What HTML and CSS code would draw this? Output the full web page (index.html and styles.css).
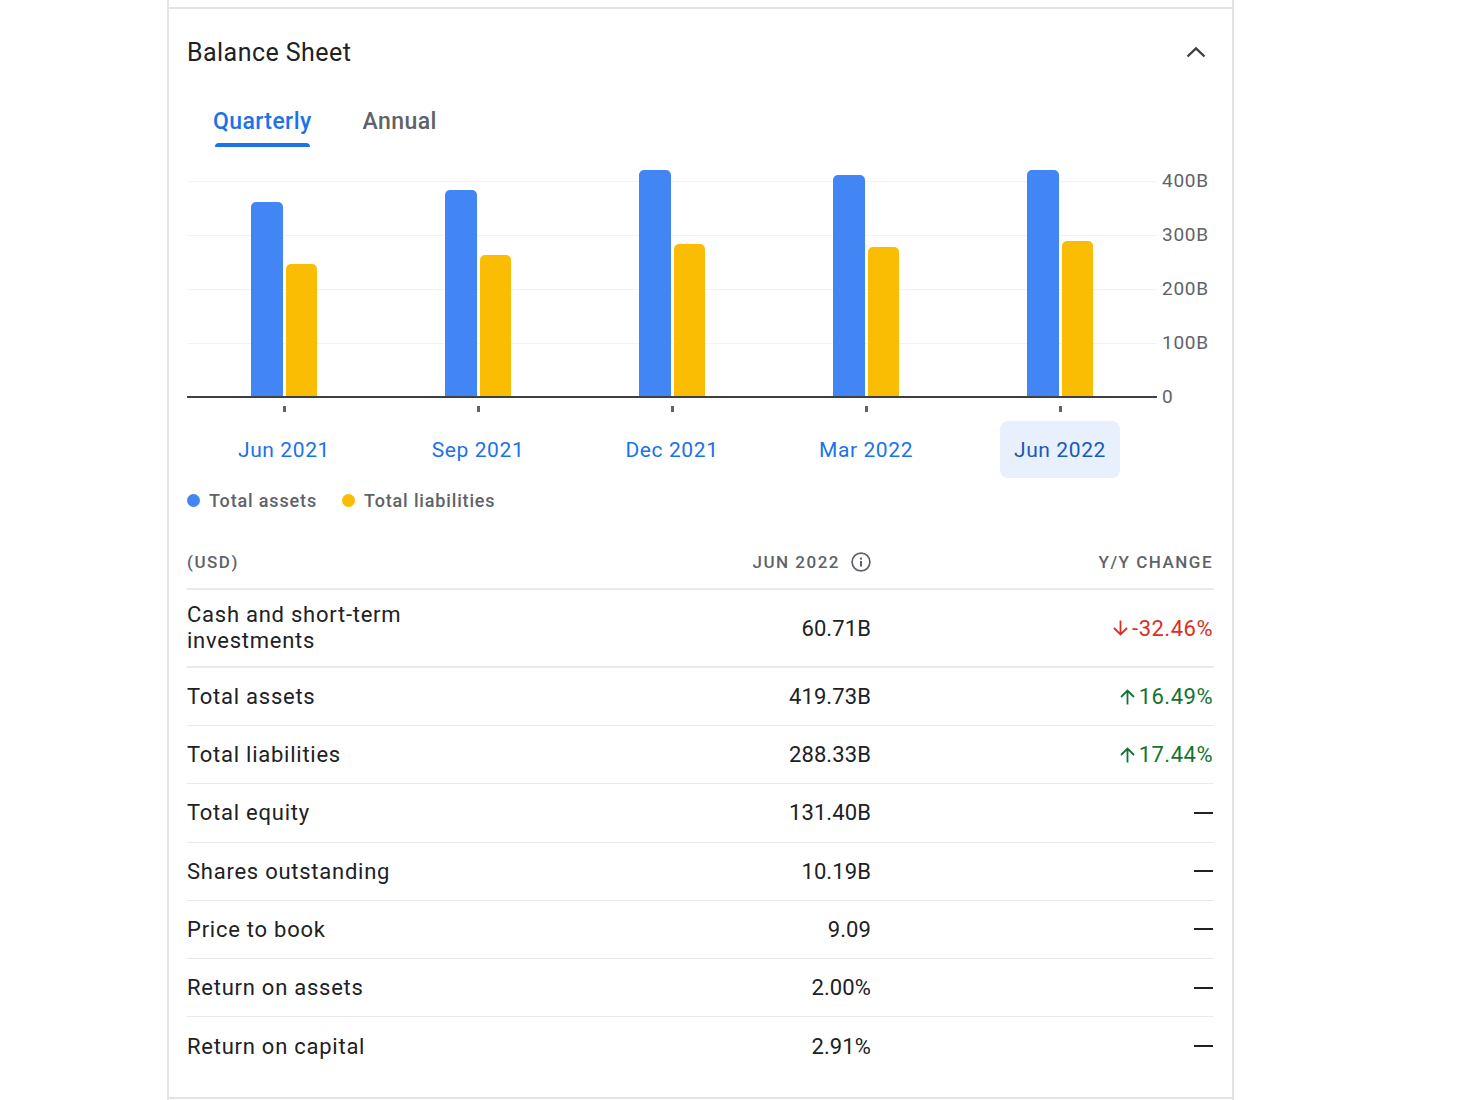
FILE: index.html
```html
<!DOCTYPE html>
<html lang="en">
<head>
<meta charset="utf-8">
<title>Balance Sheet</title>
<link rel="stylesheet" href="styles.css">
</head>
<body>
<div class="card">
  <div class="prev-section"></div>
  <section class="panel">
    <header class="card-head">
      <h2 class="card-title">Balance Sheet</h2>
      <svg class="chevron" width="20" height="12" viewBox="0 0 20 12"><path d="M1.5 10.5 L10 2.5 L18.5 10.5" fill="none" stroke="#3c4043" stroke-width="2.4"/></svg>
    </header>
    <nav class="tabs">
      <span class="tab tab-active">Quarterly</span>
      <span class="tab">Annual</span>
    </nav>
    <div class="chart">
      <div class="plot">
        <div class="gridlines">
          <div class="gridline"></div>
          <div class="gridline"></div>
          <div class="gridline"></div>
          <div class="gridline"></div>
        </div>
        <div class="bars">
          <div class="group"><div class="bar bar-blue" style="height:194px"></div><div class="bar bar-yellow" style="height:132px"></div></div>
          <div class="group"><div class="bar bar-blue" style="height:206px"></div><div class="bar bar-yellow" style="height:141px"></div></div>
          <div class="group"><div class="bar bar-blue" style="height:226px"></div><div class="bar bar-yellow" style="height:152px"></div></div>
          <div class="group"><div class="bar bar-blue" style="height:221px"></div><div class="bar bar-yellow" style="height:149px"></div></div>
          <div class="group"><div class="bar bar-blue" style="height:226px"></div><div class="bar bar-yellow" style="height:155px"></div></div>
        </div>
      </div>
      <div class="y-axis">
        <span>400B</span><span>300B</span><span>200B</span><span>100B</span><span>0</span>
      </div>
    </div>
    <div class="x-axis">
      <div class="x-col"><i class="tick"></i><span class="x-label">Jun 2021</span></div>
      <div class="x-col"><i class="tick"></i><span class="x-label">Sep 2021</span></div>
      <div class="x-col"><i class="tick"></i><span class="x-label">Dec 2021</span></div>
      <div class="x-col"><i class="tick"></i><span class="x-label">Mar 2022</span></div>
      <div class="x-col"><i class="tick"></i><span class="x-label x-label-active">Jun 2022</span></div>
    </div>
    <div class="legend">
      <span class="legend-item"><i class="dot dot-blue"></i>Total assets</span>
      <span class="legend-item"><i class="dot dot-yellow"></i>Total liabilities</span>
    </div>
    <div class="table">
      <div class="row row-head">
        <span class="cell-name">(USD)</span>
        <span class="cell-val">JUN 2022
          <svg class="info" width="20" height="20" viewBox="0 0 20 20"><circle cx="10" cy="10" r="8.9" fill="none" stroke="#5f6368" stroke-width="1.7"/><rect x="9" y="9" width="2" height="5.5" fill="#5f6368"/><rect x="9" y="5.6" width="2" height="2" fill="#5f6368"/></svg>
        </span>
        <span class="cell-chg">Y/Y CHANGE</span>
      </div>
      <div class="row row-tall">
        <span class="cell-name cell-wrap">Cash and short-term investments</span>
        <span class="cell-val">60.71B</span>
        <span class="cell-chg down"><svg class="arrow" width="15" height="16" viewBox="0 0 15 16"><path d="M7.5 0.5 V14 M1 8 L7.5 14.5 L14 8" fill="none" stroke="currentColor" stroke-width="1.8"/></svg>-32.46%</span>
      </div>
      <div class="row">
        <span class="cell-name">Total assets</span>
        <span class="cell-val">419.73B</span>
        <span class="cell-chg up"><svg class="arrow" width="15" height="16" viewBox="0 0 15 16"><path d="M7.5 15.5 V2 M1 8 L7.5 1.5 L14 8" fill="none" stroke="currentColor" stroke-width="1.8"/></svg>16.49%</span>
      </div>
      <div class="row">
        <span class="cell-name">Total liabilities</span>
        <span class="cell-val">288.33B</span>
        <span class="cell-chg up"><svg class="arrow" width="15" height="16" viewBox="0 0 15 16"><path d="M7.5 15.5 V2 M1 8 L7.5 1.5 L14 8" fill="none" stroke="currentColor" stroke-width="1.8"/></svg>17.44%</span>
      </div>
      <div class="row"><span class="cell-name">Total equity</span><span class="cell-val">131.40B</span><span class="cell-chg"><i class="dash"></i></span></div>
      <div class="row"><span class="cell-name">Shares outstanding</span><span class="cell-val">10.19B</span><span class="cell-chg"><i class="dash"></i></span></div>
      <div class="row"><span class="cell-name">Price to book</span><span class="cell-val">9.09</span><span class="cell-chg"><i class="dash"></i></span></div>
      <div class="row"><span class="cell-name">Return on assets</span><span class="cell-val">2.00%</span><span class="cell-chg"><i class="dash"></i></span></div>
      <div class="row row-last"><span class="cell-name">Return on capital</span><span class="cell-val">2.91%</span><span class="cell-chg"><i class="dash"></i></span></div>
    </div>
  </section>
</div>
</body>
</html>
```
FILE: styles.css
```css
* { box-sizing: border-box; }
html, body { margin: 0; padding: 0; background: #fff; }
body {
  height: 1100px;
  overflow: hidden;
  padding-left: 167px;
  font-family: Roboto, "Liberation Sans", sans-serif;
  color: #202124;
}
.card {
  width: 1067px;
  height: 1100px;
  border-left: 2px solid #e3e3e3;
  border-right: 2px solid #e3e3e3;
}
.prev-section { height: 9px; border-bottom: 2px solid #e3e3e3; }
.panel {
  height: 1090px;
  padding: 0 18px;
  border-bottom: 2px solid #e3e3e3;
}
.card-head {
  display: flex;
  justify-content: space-between;
  align-items: center;
  height: 87px;
}
.card-title { margin: 0; font-size: 25px; font-weight: 400; letter-spacing: 0.45px; }
.chevron { margin: 0 8px 2px 0; }
.tabs { display: flex; height: 51px; padding-left: 26px; gap: 51px; }
.tab { position: relative; font-size: 23px; font-weight: 500; letter-spacing: 0.4px; color: #5f6368; line-height: 52px; height: 51px; }
.tab-active { color: #1a73e8; }
.tab-active::after {
  content: "";
  position: absolute;
  left: 2px;
  right: 2px;
  bottom: 0;
  height: 4px;
  background: #1a73e8;
  border-radius: 4px 4px 0 0;
}
.chart { display: flex; margin-top: 22px; height: 229px; }
.plot { position: relative; width: 970px; height: 229px; border-bottom: 2px solid #3c4043; }
.gridlines { padding-top: 12px; }
.gridline { height: 54px; border-top: 1px solid #f1f3f4; }
.bars { position: absolute; inset: 0; display: flex; align-items: flex-end; }
.group { flex: 1; display: flex; align-items: flex-end; justify-content: center; gap: 3px; }
.bar { width: 31.5px; border-radius: 5px 5px 0 0; }
.bar-blue { background: #4285f4; }
.bar-yellow { background: #fbbc04; }
.y-axis {
  display: flex;
  flex-direction: column;
  padding-left: 5px;
  font-size: 19px;
  letter-spacing: 0.7px;
  color: #5f6368;
}
.y-axis span { flex: none; height: 54px; line-height: 24px; }
.x-axis { display: flex; width: 970px; }
.x-col { flex: 1; display: flex; flex-direction: column; align-items: center; }
.tick { width: 3px; height: 6px; margin-top: 8px; background: #5f6368; }
.x-label {
  width: 120px;
  height: 57px;
  margin-top: 9px;
  text-align: center;
  line-height: 58px;
  font-size: 21px;
  letter-spacing: 0.6px;
  color: #1a73e8;
  border-radius: 8px;
}
.x-label-active { background: #e8f0fe; color: #185abc; }
.legend {
  display: flex;
  gap: 25px;
  margin-top: 11px;
  height: 22px;
  align-items: center;
  font-size: 18px;
  font-weight: 500;
  color: #5f6368;
  letter-spacing: 0.85px;
}
.legend-item { display: flex; align-items: center; gap: 9px; }
.dot { width: 13px; height: 13px; border-radius: 50%; }
.dot-blue { background: #4285f4; }
.dot-yellow { background: #fbbc04; }
.table { margin-top: 30px; }
.row {
  display: grid;
  grid-template-columns: 260px 424px 342px;
  align-items: center;
  height: 58.2px;
  border-bottom: 1px solid #e8eaed;
  font-size: 22px;
}
.cell-name { letter-spacing: 0.75px; }
.cell-val { letter-spacing: 0.1px; }
.cell-chg { letter-spacing: 0.5px; }
.row-head {
  height: 49px;
  border-bottom: 2px solid #e8eaed;
  padding-bottom: 5px;
  font-size: 17px;
  font-weight: 500;
  color: #5f6368;
}
.row-head .cell-name, .row-head .cell-val, .row-head .cell-chg { letter-spacing: 1.5px; }
.row-tall { height: 78px; border-bottom-width: 2px; }
.row-last { border-bottom: 0; }
.cell-wrap { line-height: 26px; }
.cell-val, .cell-chg { display: flex; align-items: center; justify-content: flex-end; }
.info { margin-left: 11px; }
.arrow { margin-right: 4px; }
.down { color: #d93025; }
.up { color: #137333; }
.dash { display: block; width: 19px; height: 2px; background: #202124; }
```
